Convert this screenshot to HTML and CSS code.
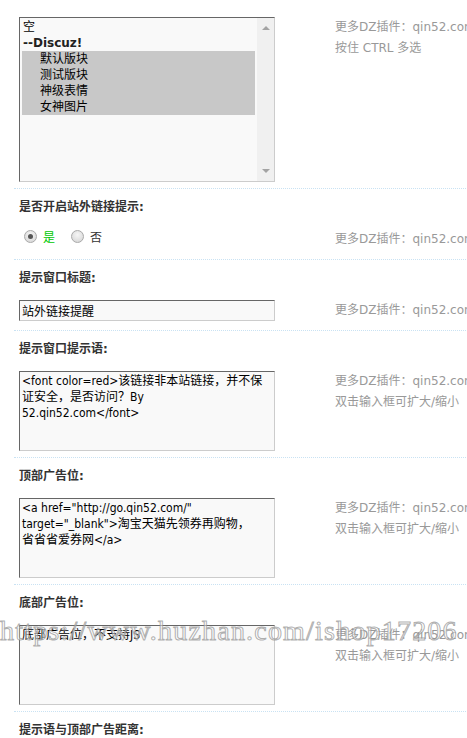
FILE: index.html
```html
<!DOCTYPE html>
<html lang="zh-CN">
<head>
  <meta charset="UTF-8">
  <meta name="viewport" content="width=device-width, initial-scale=1.0">
  <title>站外链接提示设置</title>
  <link rel="stylesheet" href="styles.css">
</head>
<body>
  <div class="form">
    <div class="row">
      <div class="ctrl">
        <div class="listbox">
          <div class="opts">
            <div class="opt">空</div>
            <div class="opt group">--Discuz!</div>
            <div class="opt sub sel">默认版块</div>
            <div class="opt sub sel">测试版块</div>
            <div class="opt sub sel">神级表情</div>
            <div class="opt sub sel">女神图片</div>
          </div>
          <div class="scroll">
            <span class="arr up"></span>
            <span class="arr down"></span>
          </div>
        </div>
      </div>
      <div class="tip">更多DZ插件：qin52.com<br>按住 CTRL 多选</div>
    </div>

    <div class="label">是否开启站外链接提示:</div>
    <div class="row">
      <div class="ctrl">
        <div class="radios">
          <label class="choice"><input type="radio" name="open" checked><span class="yes">是</span></label>
          <label class="choice"><input type="radio" name="open"><span>否</span></label>
        </div>
      </div>
      <div class="tip">更多DZ插件：qin52.com</div>
    </div>

    <div class="label">提示窗口标题:</div>
    <div class="row">
      <div class="ctrl">
        <input class="txt" type="text" value="站外链接提醒">
      </div>
      <div class="tip">更多DZ插件：qin52.com</div>
    </div>

    <div class="label">提示窗口提示语:</div>
    <div class="row">
      <div class="ctrl">
        <textarea class="area"><font color=red>该链接非本站链接，并不保证安全，是否访问？By
52.qin52.com</font></textarea>
      </div>
      <div class="tip">更多DZ插件：qin52.com<br>双击输入框可扩大/缩小</div>
    </div>

    <div class="label">顶部广告位:</div>
    <div class="row">
      <div class="ctrl">
        <textarea class="area"><a href="http://go.qin52.com/"
target="_blank">淘宝天猫先领券再购物，
省省省爱券网</a></textarea>
      </div>
      <div class="tip">更多DZ插件：qin52.com<br>双击输入框可扩大/缩小</div>
    </div>

    <div class="label">底部广告位:</div>
    <div class="row">
      <div class="ctrl">
        <textarea class="area">底部广告位，不支持JS</textarea>
      </div>
      <div class="tip">更多DZ插件：qin52.com<br>双击输入框可扩大/缩小</div>
    </div>

    <div class="label">提示语与顶部广告距离:</div>
  </div>

  <div class="watermark">https://www.huzhan.com/ishop17206</div>
</body>
</html>
```

FILE: styles.css
```css
* { margin: 0; padding: 0; box-sizing: border-box; }

html, body {
  overflow: hidden;
}

body {
  position: relative;
  min-height: 738px;
  background: #fff;
  color: #000;
  font: 12px "DejaVu Sans", "Noto Sans CJK SC", sans-serif;
}

/* Form table */
.form {
  width: 700px;
  margin-left: 14px;
  padding-top: 17px;
}

.row {
  display: flex;
  padding-bottom: 6px;
  border-bottom: 1px dotted #c9e2f3;
}

.ctrl {
  flex: 0 0 316px;
  padding-left: 5px;
}

.tip {
  padding-left: 5px;
  min-height: 24px;
  line-height: 21px;
  color: #999;
  white-space: nowrap;
}

.label {
  padding: 11px 5px 14px;
  line-height: 15px;
  font-weight: bold;
  color: #333;
}

/* Multi select */
.listbox {
  display: flex;
  width: 256px;
  height: 165px;
  border: 1px solid;
  border-color: #666 #ccc #ccc #666;
  background: #f9f9f9;
}

.opts {
  flex: 1;
  padding: 1px 2px 0 2px;
}

.opt {
  height: 16px;
  line-height: 16px;
  padding-left: 1px;
}

.opt.group {
  font-weight: bold;
  color: #222;
}

.opt.sub {
  padding-left: 18px;
}

.opt.sel {
  background: #c8c8c8;
}

.scroll {
  position: relative;
  width: 17px;
  background: #f0f0f0;
}

.arr {
  position: absolute;
  left: 5px;
  width: 0;
  height: 0;
  border-left: 4px solid transparent;
  border-right: 4px solid transparent;
}

.arr.up {
  top: 8px;
  border-bottom: 4px solid #a3a3a3;
}

.arr.down {
  bottom: 8px;
  border-top: 4px solid #a3a3a3;
}

/* Radios */
.radios {
  display: flex;
  align-items: center;
  height: 14px;
}

.choice {
  display: flex;
  align-items: center;
  margin-right: 11px;
  color: #333;
}

.choice input {
  appearance: none;
  -webkit-appearance: none;
  position: relative;
  width: 13px;
  height: 13px;
  margin: 0 6px 0 5px;
  border: 1px solid #a9a9a9;
  border-radius: 50%;
  background: radial-gradient(circle at 50% 35%, #f6f6f6, #d2d2d2);
}

.choice input:checked::after {
  content: "";
  position: absolute;
  left: 3px;
  top: 3px;
  width: 5px;
  height: 5px;
  border-radius: 50%;
  background: #555;
}

.choice .yes {
  color: #00c800;
}

/* Text fields */
.txt {
  display: block;
  width: 256px;
  height: 21px;
  padding: 0 2px;
  border: 1px solid;
  border-color: #666 #ccc #ccc #666;
  background: #f9f9f9;
  font: 12px "DejaVu Sans", "Noto Sans CJK SC", sans-serif;
  color: #000;
}

.area {
  display: block;
  width: 256px;
  height: 80px;
  padding: 1px 2px;
  border: 1px solid;
  border-color: #666 #ccc #ccc #666;
  background: #f9f9f9;
  font: 12px/16px "DejaVu Sans Condensed", "DejaVu Sans", "Noto Sans CJK SC", sans-serif;
  color: #000;
  resize: none;
  overflow: hidden;
}

/* Site watermark over the screenshot */
.watermark {
  position: absolute;
  left: 0;
  top: 617px;
  font: 28px/28px "Liberation Serif", serif;
  letter-spacing: 1.2px;
  white-space: nowrap;
  color: rgba(255, 255, 255, 0.55);
  -webkit-text-stroke: 1px rgba(140, 140, 140, 0.7);
  pointer-events: none;
}
```
